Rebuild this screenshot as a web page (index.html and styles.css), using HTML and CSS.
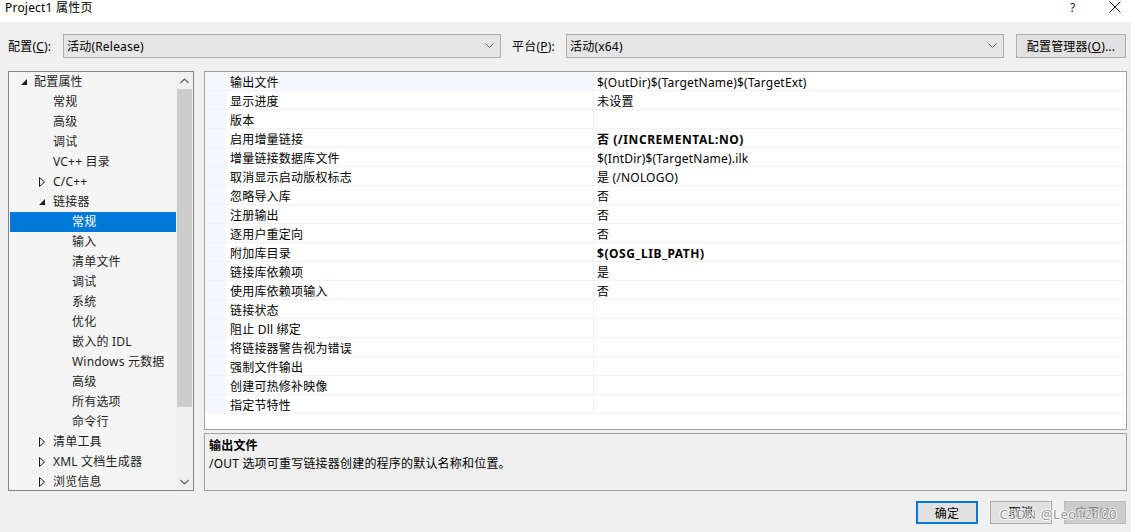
FILE: index.html
```html
<!DOCTYPE html>
<html lang="zh-CN">
<head>
<meta charset="utf-8">
<title>Project1 属性页</title>
<link rel="stylesheet" href="styles.css">
</head>
<body>
<div class="window">
  <div class="titlebar">
    <span class="title">Project1 属性页</span>
    <span class="tb-help">?</span>
    <span class="tb-close"><svg width="12" height="12" viewBox="0 0 12 12"><path d="M0.5 0.5 L11.5 11.5 M11.5 0.5 L0.5 11.5" stroke="#222" stroke-width="1" fill="none"/></svg></span>
  </div>

  <div class="toolbar">
    <span class="lbl">配置(<u>C</u>):</span>
    <div class="combo combo-config"><span>活动(Release)</span><svg class="chev" width="9" height="6" viewBox="0 0 9 6"><path d="M0.5 0.5 L4.5 4.5 L8.5 0.5" stroke="#606060" fill="none"/></svg></div>
    <span class="lbl lbl-plat">平台(<u>P</u>):</span>
    <div class="combo combo-plat"><span>活动(x64)</span><svg class="chev" width="9" height="6" viewBox="0 0 9 6"><path d="M0.5 0.5 L4.5 4.5 L8.5 0.5" stroke="#606060" fill="none"/></svg></div>
    <button class="btn btn-mgr">配置管理器(<u>O</u>)...</button>
  </div>

  <div class="main">
    <div class="tree">
      <div class="tree-list">
        <div class="node l0"><span class="tw exp"></span>配置属性</div>
        <div class="node l1"><span class="tw"></span>常规</div>
        <div class="node l1"><span class="tw"></span>高级</div>
        <div class="node l1"><span class="tw"></span>调试</div>
        <div class="node l1"><span class="tw"></span>VC++ 目录</div>
        <div class="node l1"><span class="tw col"></span>C/C++</div>
        <div class="node l1"><span class="tw exp"></span>链接器</div>
        <div class="node l2 sel"><span class="tw"></span>常规</div>
        <div class="node l2"><span class="tw"></span>输入</div>
        <div class="node l2"><span class="tw"></span>清单文件</div>
        <div class="node l2"><span class="tw"></span>调试</div>
        <div class="node l2"><span class="tw"></span>系统</div>
        <div class="node l2"><span class="tw"></span>优化</div>
        <div class="node l2"><span class="tw"></span>嵌入的 IDL</div>
        <div class="node l2"><span class="tw"></span>Windows 元数据</div>
        <div class="node l2"><span class="tw"></span>高级</div>
        <div class="node l2"><span class="tw"></span>所有选项</div>
        <div class="node l2"><span class="tw"></span>命令行</div>
        <div class="node l1"><span class="tw col"></span>清单工具</div>
        <div class="node l1"><span class="tw col"></span>XML 文档生成器</div>
        <div class="node l1"><span class="tw col"></span>浏览信息</div>
      </div>
      <div class="vscroll">
        <div class="sb-arrow"><svg width="9" height="6" viewBox="0 0 9 6"><path d="M0.5 5 L4.5 1 L8.5 5" stroke="#606060" stroke-width="1.2" fill="none"/></svg></div>
        <div class="sb-track"><div class="sb-thumb"></div></div>
        <div class="sb-arrow"><svg width="9" height="6" viewBox="0 0 9 6"><path d="M0.5 1 L4.5 5 L8.5 1" stroke="#606060" stroke-width="1.2" fill="none"/></svg></div>
      </div>
    </div>

    <div class="right">
      <div class="grid">
        <div class="row cur"><div class="gut"></div><div class="name">输出文件</div><div class="val">$(OutDir)$(TargetName)$(TargetExt)</div></div>
        <div class="row"><div class="gut"></div><div class="name">显示进度</div><div class="val">未设置</div></div>
        <div class="row"><div class="gut"></div><div class="name">版本</div><div class="val"></div></div>
        <div class="row"><div class="gut"></div><div class="name">启用增量链接</div><div class="val b">否 (/INCREMENTAL:NO)</div></div>
        <div class="row"><div class="gut"></div><div class="name">增量链接数据库文件</div><div class="val">$(IntDir)$(TargetName).ilk</div></div>
        <div class="row"><div class="gut"></div><div class="name">取消显示启动版权标志</div><div class="val">是 (/NOLOGO)</div></div>
        <div class="row"><div class="gut"></div><div class="name">忽略导入库</div><div class="val">否</div></div>
        <div class="row"><div class="gut"></div><div class="name">注册输出</div><div class="val">否</div></div>
        <div class="row"><div class="gut"></div><div class="name">逐用户重定向</div><div class="val">否</div></div>
        <div class="row"><div class="gut"></div><div class="name">附加库目录</div><div class="val b">$(OSG_LIB_PATH)</div></div>
        <div class="row"><div class="gut"></div><div class="name">链接库依赖项</div><div class="val">是</div></div>
        <div class="row"><div class="gut"></div><div class="name">使用库依赖项输入</div><div class="val">否</div></div>
        <div class="row"><div class="gut"></div><div class="name">链接状态</div><div class="val"></div></div>
        <div class="row"><div class="gut"></div><div class="name">阻止 Dll 绑定</div><div class="val"></div></div>
        <div class="row"><div class="gut"></div><div class="name">将链接器警告视为错误</div><div class="val"></div></div>
        <div class="row"><div class="gut"></div><div class="name">强制文件输出</div><div class="val"></div></div>
        <div class="row"><div class="gut"></div><div class="name">创建可热修补映像</div><div class="val"></div></div>
        <div class="row"><div class="gut"></div><div class="name">指定节特性</div><div class="val"></div></div>
      </div>
      <div class="desc">
        <div class="desc-title">输出文件</div>
        <div class="desc-text">/OUT 选项可重写链接器创建的程序的默认名称和位置。</div>
      </div>
    </div>
  </div>

  <div class="footer">
    <button class="btn btn-ok">确定</button>
    <button class="btn">取消</button>
    <button class="btn btn-dis">应用(<u>A</u>)</button>
    <span class="watermark">CSDN @Leo12100</span>
  </div>
</div>
</body>
</html>
```

FILE: styles.css
```css
* { box-sizing: border-box; }
html, body { margin: 0; padding: 0; }
body {
  width: 1131px;
  height: 532px;
  overflow: hidden;
  background: #f0f0f0;
  font-family: "Noto Sans", "Noto Sans CJK SC", sans-serif;
  font-size: 12px;
  letter-spacing: 0.2px;
  color: #000;
}
.window { position: relative; width: 1131px; height: 532px; }

/* title bar */
.titlebar {
  height: 22px;
  background: #fff;
  display: flex;
  align-items: center;
  padding-left: 5px;
}
.title { flex: 1; line-height: 14px; margin-top: -6px; }
.tb-help { width: 10px; margin-right: 29px; margin-top: -8px; color: #222; }
.tb-close { width: 12px; margin-right: 10px; margin-top: -8px; display: flex; }

/* toolbar */
.toolbar {
  display: flex;
  align-items: flex-start;
  padding: 12px 0 0 8px;
  height: 49px;
}
.lbl { width: 55px; height: 24px; line-height: 24px; padding-top: 1px; }
.lbl-plat { margin-left: 11px; width: 54px; }
.combo {
  height: 24px;
  width: 438px;
  background: #e5e5e5;
  border: 1px solid #adadad;
  display: flex;
  align-items: center;
  justify-content: space-between;
  padding: 1px 6px 0 3px;
}
.combo span { line-height: 22px; }
.chev { flex: none; margin-top: -1px; }
.btn {
  font-family: inherit;
  font-size: 12px;
  letter-spacing: 0.2px;
  color: #000;
  height: 23px;
  width: 62px;
  background: #e1e1e1;
  border: 1px solid #adadad;
  padding: 1px 0 0;
  line-height: 20px;
}
.btn-mgr { width: 110px; height: 24px; margin-left: 12px; }

/* main area */
.main {
  display: flex;
  padding-left: 8px;
  height: 420px;
}

/* tree */
.tree {
  width: 186px;
  height: 420px;
  border: 1px solid #828790;
  background: #f5f5f5;
  display: flex;
  overflow: hidden;
}
.tree-list { width: 167px; padding-left: 1px; }
.node {
  height: 20px;
  line-height: 20px;
  display: flex;
  align-items: center;
  white-space: nowrap;
  color: #1e1e1e;
}
.tw { width: 14px; height: 20px; flex: none; position: relative; }
.l0 { padding-left: 10px; }
.l1 { padding-left: 28px; }
.l1 .tw, .l2 .tw { width: 15px; }
.l2 { padding-left: 47px; }
.tw.exp::after {
  content: "";
  position: absolute;
  left: 1px;
  top: 7px;
  width: 0; height: 0;
  border-left: 6px solid transparent;
  border-bottom: 6px solid #1e1e1e;
}
.tw.col::after {
  content: "";
  position: absolute;
  left: 1px;
  top: 5px;
  width: 7px; height: 10px;
  background: url("data:image/svg+xml;utf8,<svg xmlns='http://www.w3.org/2000/svg' width='7' height='10'><path d='M0.5 0.5 L5.5 5 L0.5 9.5 Z' fill='none' stroke='%231e1e1e'/></svg>") no-repeat;
}
.node.sel { background: #0078d7; color: #fff; }

.vscroll {
  width: 17px;
  display: flex;
  flex-direction: column;
  background: #f0f0f0;
}
.sb-arrow { height: 17px; display: flex; align-items: center; justify-content: center; }
.sb-track { flex: 1; padding: 0 1px; }
.sb-thumb { height: 318px; background: #cdcdcd; }

/* property grid */
.right {
  margin-left: 10px;
  width: 923px;
  display: flex;
  flex-direction: column;
}
.grid {
  height: 359px;
  background: #fff;
  border: 1px solid #a0a0a0;
}
.row {
  display: flex;
  height: 19px;
  border-bottom: 1px solid #f0f2f7;
}
.gut { width: 21px; background: #f5f7fc; flex: none; }
.name {
  width: 368px;
  padding: 3px 0 0 4px;
  line-height: 15px;
  border-right: 1px solid #f0f2f7;
  flex: none;
  white-space: nowrap;
}
.row.cur .name { background: #f5f7fc; }
.val { flex: 1; padding: 3px 0 0 3px; line-height: 15px; white-space: nowrap; }
.val.b { font-weight: bold; letter-spacing: 0.55px; }

/* description */
.desc {
  margin-top: 3px;
  height: 58px;
  border: 1px solid #a0a0a0;
  background: #f0f0f0;
  padding: 3px 4px;
}
.desc-title { font-weight: bold; line-height: 18px; }
.desc-text { line-height: 18px; }

/* footer */
.footer {
  display: flex;
  justify-content: flex-end;
  gap: 12px;
  padding: 10px 5px 0 0;
  position: relative;
}
.btn-ok { border: 2px solid #0078d7; }
.btn-dis { background: #cccccc; border-color: #bfbfbf; color: #838383; }
.watermark {
  position: absolute;
  right: 14px;
  top: 14px;
  font-size: 13px;
  color: #8c8c8c;
  opacity: 0.85;
  letter-spacing: 0.6px;
  pointer-events: none;
  text-shadow: 1px 0 0 #fff, -1px 0 0 #fff, 0 1px 0 #fff, 0 -1px 0 #fff;
}
```
